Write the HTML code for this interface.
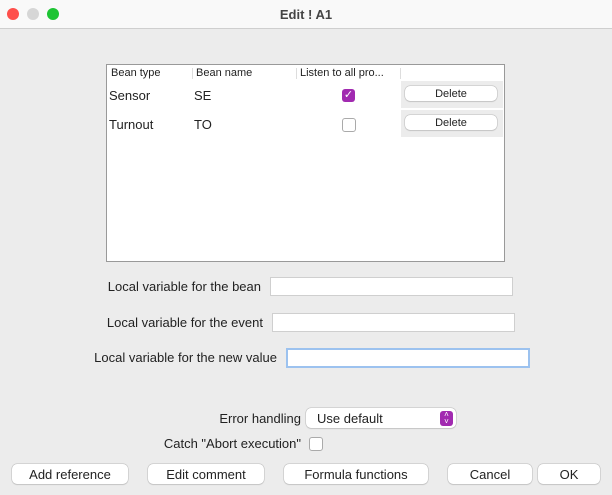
<!DOCTYPE html><html><head><style>
body{margin:0;width:612px;height:495px;background:#ececec;font-family:"Liberation Sans",sans-serif;position:relative;overflow:hidden;color:#222}
.a{position:absolute}
.tb{left:0;top:0;width:612px;height:28px;background:#f9f9f9;border-bottom:1px solid #cfcfcf}
.dot{width:12px;height:12px;border-radius:50%;top:8px}
.btn{background:#fff;border-radius:5px;box-shadow:0 0 0 .5px #bbb,0 1px 1px #ccc;font-size:13px;text-align:center;line-height:21px;height:20px}
.lbl{font-size:13px;text-align:right}
.fld{background:#fff;border:1px solid #cfcfcf;height:17px}
.cb{width:12px;height:12px;border:1px solid #aaa;border-radius:3px;background:#fff}
</style></head><body>
<div class="a tb"></div>
<div class="a dot" style="left:7px;background:#fe4f4b"></div>
<div class="a dot" style="left:27px;background:#d6d6d6"></div>
<div class="a dot" style="left:47px;background:#1dc433"></div>
<div class="a" style="left:0;width:612px;top:7px;text-align:center;font-size:13px;font-weight:bold;color:#444">Edit ! A1</div>

<div class="a" style="left:106px;top:64px;width:397px;height:196px;background:#fff;border:1px solid #999"></div>
<div class="a" style="left:107px;top:65px;width:396px;height:15px;font-size:11px">
<span class="a" style="left:4px;top:2px">Bean type</span>
<span class="a" style="left:89px;top:2px">Bean name</span>
<span class="a" style="left:193px;top:2px">Listen to all pro...</span>
<div class="a" style="left:85px;top:3px;width:1px;height:11px;background:#ddd"></div>
<div class="a" style="left:189px;top:3px;width:1px;height:11px;background:#ddd"></div>
<div class="a" style="left:293px;top:3px;width:1px;height:11px;background:#ddd"></div>
</div>
<div class="a" style="left:401px;top:81px;width:102px;height:27px;background:#ececec"></div>
<div class="a" style="left:401px;top:110px;width:102px;height:27px;background:#ececec"></div>
<div class="a" style="left:109px;top:88px;font-size:13px">Sensor</div>
<div class="a" style="left:194px;top:88px;font-size:13px">SE</div>
<div class="a" style="left:109px;top:117px;font-size:13px">Turnout</div>
<div class="a" style="left:194px;top:117px;font-size:13px">TO</div>
<div class="a" style="left:342px;top:89px;width:13px;height:13px;border-radius:3px;background:#a12ab0;color:#fff;font-size:11px;line-height:13px;text-align:center">✓</div>
<div class="a cb" style="left:342px;top:118px"></div>
<div class="a btn" style="left:405px;top:86px;width:92px;height:15px;line-height:16px;font-size:11px">Delete</div>
<div class="a btn" style="left:405px;top:115px;width:92px;height:15px;line-height:16px;font-size:11px">Delete</div>

<div class="a lbl" style="left:60px;width:201px;top:279px">Local variable for the bean</div>
<div class="a fld" style="left:270px;top:277px;width:241px"></div>
<div class="a lbl" style="left:60px;width:203px;top:315px">Local variable for the event</div>
<div class="a fld" style="left:272px;top:313px;width:241px"></div>
<div class="a lbl" style="left:40px;width:237px;top:350px">Local variable for the new value</div>
<div class="a fld" style="left:286px;top:348px;width:240px;border:2px solid #9cc2ef;height:16px"></div>

<div class="a lbl" style="left:150px;width:151px;top:411px">Error handling</div>
<div class="a btn" style="left:306px;top:408px;width:150px;text-align:left"><span style="margin-left:11px">Use default</span></div>
<div class="a" style="left:440px;top:411px;width:13px;height:15px;border-radius:3px;background:#a12ab0;color:#fff;font-size:8px;line-height:7px;text-align:center">˄<br>˅</div>
<div class="a lbl" style="left:100px;width:201px;top:436px">Catch "Abort execution"</div>
<div class="a cb" style="left:309px;top:437px"></div>

<div class="a btn" style="left:12px;top:464px;width:116px">Add reference</div>
<div class="a btn" style="left:148px;top:464px;width:116px">Edit comment</div>
<div class="a btn" style="left:284px;top:464px;width:144px">Formula functions</div>
<div class="a btn" style="left:448px;top:464px;width:84px">Cancel</div>
<div class="a btn" style="left:538px;top:464px;width:62px">OK</div>
</body></html>
